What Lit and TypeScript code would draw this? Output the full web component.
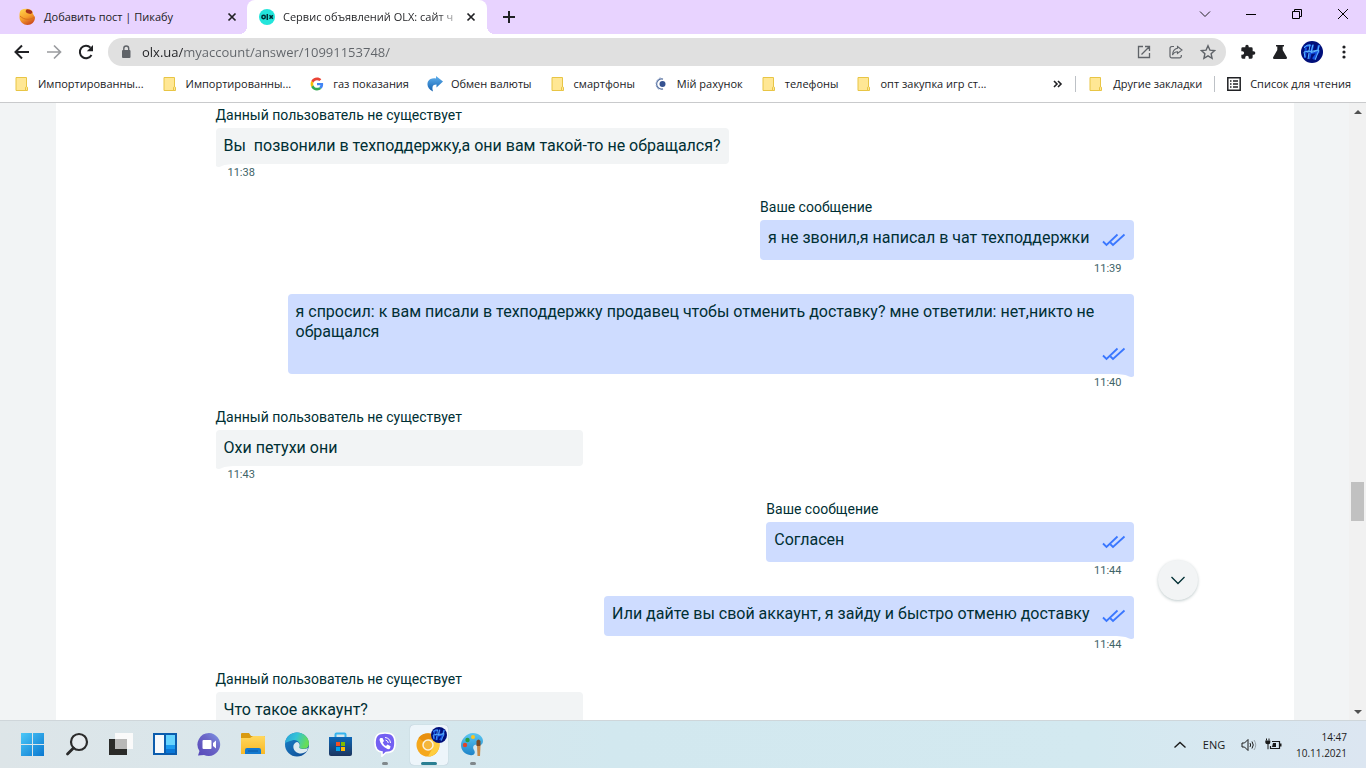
import { LitElement, html, css, svg, nothing, TemplateResult } from "lit";
import { customElement, property } from "lit/decorators.js";
import { classMap } from "lit/directives/class-map.js";

interface Message {
  own: boolean;
  author?: string;
  text: string;
  time?: string;
  tail?: boolean;
}

interface Bookmark {
  icon: TemplateResult;
  label: string;
}

const PEER = "Данный пользователь не существует";
const ME = "Ваше сообщение";

const messages: Message[] = [
  { own: false, author: PEER, text: "Вы  позвонили в техподдержку,а они вам такой-то не обращался?", time: "11:38", tail: true },
  { own: true, author: ME, text: "я не звонил,я написал в чат техподдержки", time: "11:39" },
  { own: true, text: "я спросил: к вам писали в техподдержку продавец чтобы отменить доставку? мне ответили: нет,никто не обращался", time: "11:40", tail: true },
  { own: false, author: PEER, text: "Охи петухи они", time: "11:43", tail: true },
  { own: true, author: ME, text: "Согласен", time: "11:44" },
  { own: true, text: "Или дайте вы свой аккаунт, я зайду и быстро отменю доставку", time: "11:44", tail: true },
  { own: false, author: PEER, text: "Что такое аккаунт?", tail: true },
];

/* ---------- icons ---------- */

const folder = html`<svg width="16" height="16" viewBox="0 0 16 16">
  <path d="M2 1.500h10.500v13H2z" fill="#ffe794" stroke="#e8c545" />
  <path d="M11.500 14.500v-3.200q1-1.200 2 0v3.200z" fill="#ffe794" stroke="#e8c545" />
</svg>`;

const google = html`<svg width="16" height="16" viewBox="-6 -6 60 60">
  <path fill="#ea4335" d="M24 9.500c3.500 0 6.700 1.200 9.200 3.600l6.900-6.900C35.900 2.400 30.500 0 24 0 14.600 0 6.500 5.400 2.600 13.200l8 6.200C12.400 13.700 17.700 9.500 24 9.500z" />
  <path fill="#4285f4" d="M47 24.500c0-1.600-.2-3.100-.4-4.500H24v9h12.900c-.6 3-2.300 5.500-4.800 7.200l7.700 6C44.400 38 47 32 47 24.500z" />
  <path fill="#fbbc05" d="M10.500 28.600c-.5-1.500-.8-3-.8-4.600s.3-3.100.8-4.600l-8-6.200C.9 16.500 0 20.100 0 24s.9 7.500 2.600 10.800z" />
  <path fill="#34a853" d="M24 48c6.500 0 11.900-2.100 15.900-5.800l-7.700-6c-2.200 1.500-4.900 2.300-8.200 2.300-6.300 0-11.600-4.200-13.500-9.900l-8 6.200C6.500 42.600 14.600 48 24 48z" />
</svg>`;

const exchange = html`<svg width="16" height="16" viewBox="0 0 16 16">
  <defs><linearGradient id="ex" x1="0" y1="0" x2="0" y2="1"><stop offset="0" stop-color="#5fb0ee" /><stop offset="1" stop-color="#1460ae" /></linearGradient></defs>
  <path d="M9 0l7 5.500-6.500 6V8.500C6 8.500 4.500 10.500 6 15.500 1 13 -.5 9 1 5.500 2.500 2.500 6 2 9 2.500z" fill="url(#ex)" />
</svg>`;

const bank = html`<svg width="16" height="16" viewBox="0 0 16 16">
  <circle cx="9.500" cy="8" r="3" fill="#355291" />
  <path d="M10 3.200a5 5 0 1 0 0 9.600" fill="none" stroke="#56709f" stroke-width="1.200" />
  <path d="M7.500 1.800A6.600 6.600 0 0 0 6.500 13.800" fill="none" stroke="#8b9fc8" stroke-width="1" stroke-dasharray="2 1" />
</svg>`;

const bookmarks: Bookmark[] = [
  { icon: folder, label: "Импортированны..." },
  { icon: folder, label: "Импортированны..." },
  { icon: google, label: "газ показания" },
  { icon: exchange, label: "Обмен валюты" },
  { icon: folder, label: "смартфоны" },
  { icon: bank, label: "Мій рахунок" },
  { icon: folder, label: "телефоны" },
  { icon: folder, label: "опт закупка игр ст..." },
];

const cross = html`<svg width="16" height="16" viewBox="0 0 16 16"><path d="M4.500 4.500l7 7m0-7l-7 7" stroke="#202124" stroke-width="1.700" /></svg>`;

const pikabu = html`<svg width="18" height="18" viewBox="0 0 18 18">
  <defs><linearGradient id="pk" x1="0.200" y1="0" x2="0.700" y2="1"><stop offset="0" stop-color="#ffd14a" /><stop offset=".5" stop-color="#f7a02c" /><stop offset="1" stop-color="#c8441a" /></linearGradient></defs>
  <path d="M3 2Q7 0 11 1q4 1.500 3.800 4.500L17 9.500c0 4.500-3.500 7.500-7.500 7.500S2 14 1.500 10Q1 4 3 2z" fill="url(#pk)" />
  <ellipse cx="11" cy="3.600" rx="3.400" ry="2" fill="#a8341a" transform="rotate(20 11 3.600)" />
  <path d="M2 8c4 4 10 4.500 14.500 1" fill="none" stroke="#d9701c" stroke-width="1" />
</svg>`;

const olx = html`<svg width="16" height="16" viewBox="0 0 16 16">
  <circle cx="8" cy="8" r="8" fill="#23e5db" />
  <circle cx="4.600" cy="8" r="1.700" fill="none" stroke="#002f34" stroke-width="1.500" />
  <path d="M8.300 5v6M10.500 6.200l3.300 3.600m0-3.600l-3.300 3.600" stroke="#002f34" stroke-width="1.500" />
</svg>`;

const checks = html`<svg class="checks" width="24" height="24" viewBox="0 0 24 24" role="img" aria-label="Прочитано">
  <path d="M1 13.500L4.500 17 15.500 6.500M8.500 14.500L11 17 22.500 6.500" fill="none" stroke="#3a77ff" stroke-width="1.800" />
</svg>`;

const avatar = (size: number) => html`<svg width=${size} height=${size} viewBox="0 0 22 22">
  <circle cx="11" cy="11" r="11" fill="#000f7a" />
  <path d="M3 6l7-2M5 5L4 17M4 11l6-1-2 8M12 4l-2 8 7-1M18 4l-4 14M12 18l6-8" fill="none" stroke="#1450e0" stroke-width="2.200" />
  <path d="M3 7q3-4 6-3l-1 6-5 1 1 5M12 3.500l-2 8 7-2 1-5M8 12l-1 6M18 9l-4 10M6 11l12-2" fill="none" stroke="#5fb8ff" stroke-width="1" />
</svg>`;

/* ---------- browser tab strip ---------- */

@customElement("tab-strip")
export class TabStrip extends LitElement {
  static styles = css`
    :host { display: flex; justify-content: space-between; height: 34px; background: #e8d3ff; }
    .tabs, .window { display: flex; }
    .tab { display: flex; align-items: center; width: 240px; padding: 0 8px 0 12px; gap: 8px; box-sizing: border-box; position: relative; color: #202124; }
    .first { width: 247px; padding: 0 7px 0 18px; }
    .active { background: #fff; border-radius: 8px 8px 0 0; }
    .active::before, .active::after { content: ""; position: absolute; bottom: 0; width: 8px; height: 8px; }
    .active::before { right: 100%; background: radial-gradient(circle at 0 0, #e8d3ff 8px, #fff 8px); }
    .active::after { left: 100%; background: radial-gradient(circle at 100% 0, #e8d3ff 8px, #fff 8px); }
    .name { flex: 1; min-width: 0; white-space: nowrap; font-size: 11px; line-height: 16px; color: inherit; text-decoration: none; }
    .active .name { color: transparent; background: linear-gradient(90deg, #202124 154px, #20212420 178px); -webkit-background-clip: text; background-clip: text; }
    button { border: 0; padding: 0; background: none; display: flex; align-items: center; justify-content: center; font: inherit; }
    .add { width: 44px; }
    .window button { width: 46px; height: 28px; }
    svg { display: block; flex: none; }
  `;
  render() {
    return html`
      <nav class="tabs">
        <div class="tab first">${pikabu}<a class="name" href="#">Добавить пост | Пикабу</a><button aria-label="Закрыть вкладку">${cross}</button></div>
        <div class="tab active">${olx}<a class="name" href="#">Сервис объявлений OLX: сайт ч</a><button aria-label="Закрыть вкладку">${cross}</button></div>
        <button class="add" aria-label="Новая вкладка"><svg width="14" height="14" viewBox="0 0 14 14"><path d="M7 1v12M1 7h12" stroke="#202124" stroke-width="2" /></svg></button>
      </nav>
      <div class="window">
        <button aria-label="Поиск вкладок"><svg width="12" height="12" viewBox="0 0 12 12"><path d="M1 3.500l5 5 5-5" fill="none" stroke="#222" /></svg></button>
        <button aria-label="Свернуть"><svg width="12" height="12" viewBox="0 0 12 12"><path d="M1 6.500h10" stroke="#000" /></svg></button>
        <button aria-label="Восстановить"><svg width="12" height="12" viewBox="0 0 12 12"><path d="M1.500 3.500h7v7h-7zM3.500 3.500v-2h7v7h-2" fill="none" stroke="#000" /></svg></button>
        <button aria-label="Закрыть"><svg width="12" height="12" viewBox="0 0 12 12"><path d="M1 1l10 10M11 1L1 11" stroke="#000" /></svg></button>
      </div>
    `;
  }
}

/* ---------- address bar ---------- */

@customElement("address-bar")
export class AddressBar extends LitElement {
  static styles = css`
    :host { display: flex; align-items: center; height: 36px; padding: 0 6px; background: #fff; }
    button { width: 32px; height: 28px; border: 0; padding: 0; background: none; display: flex; align-items: center; justify-content: center; flex: none; }
    .field { flex: 1; display: flex; align-items: center; height: 28px; margin: 0 6px; padding: 0 2px 0 10px; border-radius: 14px; background: #e0e0e0; }
    input {
      flex: 1; min-width: 0; border: 0; outline: 0; padding: 0; margin-left: 8px; height: 24px; font: 13px/24px "Open Sans", "Noto Sans", sans-serif;
      color: transparent; background: linear-gradient(90deg, #202124 41px, #5f6368 41px); -webkit-background-clip: text; background-clip: text;
    }
    svg { display: block; flex: none; }
  `;
  render() {
    return html`
      <button aria-label="Назад"><svg width="16" height="16" viewBox="0 0 16 16"><path d="M15 8H2M8 1.500L1.500 8 8 14.500" fill="none" stroke="#202124" stroke-width="2" /></svg></button>
      <button aria-label="Вперёд"><svg width="16" height="16" viewBox="0 0 16 16"><path d="M1 8h13M8 1.500L14.500 8 8 14.500" fill="none" stroke="#9a9c9f" stroke-width="1.700" /></svg></button>
      <button aria-label="Обновить"><svg width="16" height="16" viewBox="0 0 16 16"><path d="M13.500 11A6.200 6.200 0 1 1 12.500 3.600" fill="none" stroke="#202124" stroke-width="2" /><path d="M15 1v6.200H8.800z" fill="#202124" /></svg></button>
      <div class="field">
        <svg width="16" height="16" viewBox="0 0 16 16"><rect x="4" y="6" width="8.500" height="8" rx="1" fill="#5f6368" /><path d="M5.800 7V4.500a2.400 2.400 0 0 1 4.900 0V7" fill="none" stroke="#5f6368" stroke-width="1.400" /></svg>
        <input aria-label="Адресная строка" value="olx.ua/myaccount/answer/10991153748/" />
        <button aria-label="Открыть"><svg width="14" height="14" viewBox="0 0 14 14"><path d="M6 1.500H1.500v11h11V8M8 1.500h4.500V6M12.500 1.500L4.500 9.500" fill="none" stroke="#5f6368" stroke-width="1.300" /></svg></button>
        <button aria-label="Поделиться"><svg width="14" height="14" viewBox="0 0 14 14"><path d="M5 1.500H3A1.800 1.800 0 0 0 1 3.300V11a1.700 1.700 0 0 0 1.800 1.800h7.700A1.700 1.700 0 0 0 12.300 11v-1" fill="none" stroke="#5f6368" stroke-width="1.200" /><path d="M8.500 1.500L13 5 8.500 8.500V6.700C6 6.700 4.500 7.800 3.500 10 3.700 6.500 5.500 3.800 8.500 3.300z" fill="none" stroke="#5f6368" stroke-width="1.100" /></svg></button>
        <button aria-label="Добавить в закладки"><svg width="16" height="16" viewBox="0 0 16 16"><path d="M8 1.800l1.900 4.300 4.700.5-3.500 3.100 1 4.600L8 11.900l-4.100 2.400 1-4.600L1.400 6.600l4.700-.5z" fill="none" stroke="#5f6368" stroke-width="1.400" /></svg></button>
      </div>
      <button aria-label="Расширения"><svg width="16" height="16" viewBox="0 0 24 24"><path d="M20.500 11H19V7a2 2 0 0 0-2-2h-4V3.500a2.500 2.500 0 0 0-5 0V5H4a2 2 0 0 0-2 2v3.800h1.500a2.700 2.700 0 0 1 0 5.400H2V20a2 2 0 0 0 2 2h3.800v-1.500a2.700 2.700 0 0 1 5.400 0V22H17a2 2 0 0 0 2-2v-4h1.500a2.500 2.500 0 0 0 0-5z" fill="#202124" /></svg></button>
      <button aria-label="Эксперименты"><svg width="16" height="16" viewBox="0 0 16 16"><path d="M4 1h8v1.500h-1.300V6L15 13.500Q15 15 14 15H2q-1 0-1-1.500L5.300 6V2.500H4z" fill="#202124" /></svg></button>
      <button aria-label="Профиль">${avatar(22)}</button>
      <button aria-label="Меню"><svg width="16" height="16" viewBox="0 0 16 16" fill="#202124"><circle cx="8" cy="3" r="1.600" /><circle cx="8" cy="8" r="1.600" /><circle cx="8" cy="13" r="1.600" /></svg></button>
    `;
  }
}

/* ---------- bookmarks ---------- */

@customElement("bookmarks-bar")
export class BookmarksBar extends LitElement {
  static styles = css`
    :host { display: flex; align-items: center; justify-content: space-between; height: 28px; padding: 0 15px 4px 14px; background: #fff; border-bottom: 1px solid #c9cacc; }
    nav, .end { display: flex; align-items: center; }
    nav { gap: 18px; }
    .end { gap: 12px; }
    a { display: flex; align-items: center; gap: 8px; font-size: 11px; line-height: 16px; color: #202124; text-decoration: none; white-space: nowrap; }
    .end a { gap: 9px; }
    button { border: 0; padding: 0; width: 10px; height: 20px; background: none; display: flex; align-items: center; justify-content: center; }
    .line { width: 1px; height: 16px; background: #bdc1c6; }
    svg { display: block; flex: none; }
  `;
  render() {
    return html`
      <nav>${bookmarks.map((b) => html`<a href="#">${b.icon}<span>${b.label}</span></a>`)}</nav>
      <div class="end">
        <button aria-label="Ещё закладки"><svg width="10" height="8" viewBox="0 0 10 8"><path d="M1 1l3 3-3 3M5 1l3 3-3 3" fill="none" stroke="#202124" stroke-width="1.600" /></svg></button>
        <span class="line"></span>
        <a href="#">${folder}<span>Другие закладки</span></a>
        <span class="line"></span>
        <a href="#"><svg width="14" height="14" viewBox="0 0 14 14"><path d="M.8.8h12.400v12.400H.8z" fill="none" stroke="#202124" stroke-width="1.500" /><path d="M3 4h1.500M3 7h1.500M3 10h1.500M6 4h5M6 7h5M6 10h5" stroke="#202124" stroke-width="1.400" /></svg><span>Список для чтения</span></a>
      </div>
    `;
  }
}

/* ---------- chat ---------- */

@customElement("chat-message")
export class ChatMessage extends LitElement {
  @property({ attribute: false }) message!: Message;

  static styles = css`
    :host { display: block; margin-bottom: 16px; color: #002f34; }
    .row { display: flex; flex-direction: column; align-items: flex-start; }
    .own { align-items: flex-end; }
    .box { min-width: 40%; max-width: 846px; position: relative; }
    .author { height: 22px; font-size: 14px; line-height: 18px; }
    .bubble { padding: 8px; border-radius: 4px; background: #f2f4f5; font-size: 16px; line-height: 20px; position: relative; }
    .own .bubble { background: #cedcff; display: flex; flex-wrap: wrap; justify-content: space-between; column-gap: 12px; }
    .text { white-space: pre-wrap; }
    .checks { display: block; margin-left: auto; }
    .tail { display: block; position: absolute; top: 100%; left: 0; margin-top: -1px; }
    .own .tail { left: auto; right: 0; transform: scaleX(-1); }
    .bubble.pointed { border-bottom-left-radius: 0; }
    .own .bubble.pointed { border-bottom-left-radius: 4px; border-bottom-right-radius: 0; }
    .time { display: block; padding: 0 12px; font-size: 11px; line-height: 18px; color: #406367; }
    .own .time { text-align: right; }
  `;
  render() {
    const m = this.message;
    return html`
      <article class=${classMap({ row: true, own: m.own })}>
        <div class="box">
          ${m.author ? html`<div class="author">${m.author}</div>` : nothing}
          <div class=${classMap({ bubble: true, pointed: !!m.tail })}>
            <span class="text">${m.text}</span>
            ${m.own ? checks : nothing}
            ${m.tail
              ? html`<svg class="tail" width="20" height="4" viewBox="0 0 20 4"><path d="M0 0H20V1C12 1 8 2 4 3.800Q0 4.500 0 2.500z" fill=${m.own ? "#cedcff" : "#f2f4f5"} /></svg>`
              : nothing}
          </div>
          ${m.time ? html`<time class="time">${m.time}</time>` : nothing}
        </div>
      </article>
    `;
  }
}

@customElement("chat-page")
export class ChatPage extends LitElement {
  static styles = css`
    :host { display: flex; min-height: 0; background: #f2f4f5; }
    .view { flex: 1; min-width: 0; display: flex; justify-content: center; overflow: hidden; position: relative; }
    main { flex: 0 1 1238px; min-width: 0; background: #fff; padding: 3px 160px 0; box-sizing: border-box; font-family: Roboto, "Noto Sans", sans-serif; }
    .down {
      position: absolute; right: 151px; bottom: 120px; width: 40px; height: 40px; border: 0; border-radius: 50%; padding: 0; background: #f2f4f5;
      box-shadow: 0 1px 3px rgba(0, 47, 52, 0.25); display: flex; align-items: center; justify-content: center;
    }
    .bar { width: 17px; display: flex; flex-direction: column; background: #f1f1f1; }
    .bar button { height: 17px; border: 0; padding: 0; background: none; display: flex; align-items: center; justify-content: center; }
    .track { flex: 1; display: flex; flex-direction: column; padding: 0 2px 0 2px; }
    .before { flex: 362 1 0; }
    .thumb { flex: 0 0 39px; background: #c1c1c1; }
    .after { flex: 182 1 0; }
  `;
  render() {
    return html`
      <div class="view">
        <main>${messages.map((m) => html`<chat-message .message=${m}></chat-message>`)}</main>
        <button class="down" aria-label="Вниз"><svg width="16" height="16" viewBox="0 0 16 16"><path d="M1.500 5L8 11.500 14.500 5" fill="none" stroke="#002f34" stroke-width="1.300" /></svg></button>
      </div>
      <div class="bar">
        <button aria-label="Прокрутить вверх"><svg width="8" height="4" viewBox="0 0 8 4"><path d="M0 4l4-4 4 4z" fill="#505050" /></svg></button>
        <div class="track"><div class="before"></div><div class="thumb"></div><div class="after"></div></div>
        <button aria-label="Прокрутить вниз"><svg width="8" height="4" viewBox="0 0 8 4"><path d="M0 0l4 4 4-4z" fill="#505050" /></svg></button>
      </div>
    `;
  }
}

/* ---------- taskbar ---------- */

interface App {
  name: string;
  art: TemplateResult;
  state?: "open" | "active";
}

const apps: App[] = [
  {
    name: "Пуск",
    art: svg`<defs><linearGradient id="w" x1="0" y1="0" x2="1" y2="1"><stop offset="0" stop-color="#4cc8f8"/><stop offset="1" stop-color="#0a78d0"/></linearGradient></defs>
      <path d="M1 1h11v11H1zM13 1h11v11H13zM1 13h11v11H1zM13 13h11v11H13z" fill="url(#w)"/>`,
  },
  {
    name: "Поиск",
    art: svg`<circle cx="15" cy="10" r="8" fill="#e6ebee" stroke="#2b2b2b" stroke-width="2.200"/><path d="M9.500 16L3.500 22" stroke="#2b2b2b" stroke-width="2.800" stroke-linecap="round"/>`,
  },
  {
    name: "Представление задач",
    art: svg`<path d="M1 7h18v16H1z" fill="#2a2a28"/><path d="M7 1h18v16H7z" fill="#fafafa"/><path d="M7 7h12v10H7z" fill="#b8b8b7"/>`,
  },
  {
    name: "Виджеты",
    art: svg`<path d="M1 1h24v22H1z" fill="#0b5cad"/><path d="M3 3h9v18H3z" fill="#f7f9fc"/><path d="M14 3h9v10h-9z" fill="#66d4ff"/><path d="M14 13h9v4h-9z" fill="#1a9bf0"/><path d="M14 17h9v4h-9z" fill="#0a78d8"/>`,
  },
  {
    name: "Чат",
    art: svg`<defs><linearGradient id="ch" x1="0" y1="1" x2="1" y2="0"><stop offset="0" stop-color="#5546b8"/><stop offset=".6" stop-color="#6d68c8"/><stop offset="1" stop-color="#7f9ae8"/></linearGradient></defs>
      <path d="M13 1a11.500 11.500 0 1 1-5 22l-6 .5 1.500-4.500A11.500 11.500 0 0 1 13 1z" fill="url(#ch)"/><rect x="6.500" y="8" width="9" height="9" rx="1" fill="#fff"/><path d="M17 11l3-2.500v8L17 14z" fill="#fff"/>`,
  },
  {
    name: "Проводник",
    art: svg`<defs><linearGradient id="fo" x1="0" y1="0" x2="0" y2="1"><stop offset="0" stop-color="#ffd75e"/><stop offset="1" stop-color="#f9b824"/></linearGradient></defs>
      <path d="M1 2q0-1 1-1h7l2 3h13q1 0 1 1v5H1z" fill="#d99a10"/><path d="M1 6h9l3-2h11q1 0 1 1v17H1z" fill="url(#fo)"/><path d="M5 22v-4q0-2 2-2h12q2 0 2 2v4z" fill="#1379cf"/><path d="M8 19h10" stroke="#0b58a4"/>`,
  },
  {
    name: "Edge",
    art: svg`<defs><linearGradient id="e1" x1="0" y1="0" x2="1" y2=".3"><stop offset="0" stop-color="#2a9fd8"/><stop offset=".5" stop-color="#33c3d8"/><stop offset="1" stop-color="#66dd58"/></linearGradient><linearGradient id="e2" x1="0" y1="0" x2=".8" y2="1"><stop offset="0" stop-color="#1b86cc"/><stop offset="1" stop-color="#0f4e98"/></linearGradient></defs>
      <circle cx="13" cy="12.500" r="12" fill="url(#e2)"/><path d="M1 11C2 4 7 .5 13 .5s12 4.500 12 11-8 6-10 4c3-4-2-9-7-7-4 1-6 2-7 2.500z" fill="url(#e1)"/><path d="M15 15.500c1.500-2 .5-5-2-5.500-4 1-5 6-1.500 9.500 3.500 3 8 2.500 11.500-.5l1-3c-3 1.500-7 1.500-9-.5z" fill="#dceaf0"/>`,
  },
  {
    name: "Microsoft Store",
    art: svg`<defs><linearGradient id="st" x1="0" y1="0" x2="0" y2="1"><stop offset="0" stop-color="#0d68b8"/><stop offset="1" stop-color="#1c355e"/></linearGradient></defs>
      <path d="M7.500 6V2.500q0-1 1-1h8q1 0 1 1V6" fill="none" stroke="#35b4ee" stroke-width="2"/><path d="M1 5h23v17q0 2-2 2H3q-2 0-2-2z" fill="url(#st)"/><path d="M8 10h4v4H8z" fill="#f25022"/><path d="M13 10h4v4h-4z" fill="#7fba00"/><path d="M8 15h4v4H8z" fill="#00a4ef"/><path d="M13 15h4v4h-4z" fill="#ffb900"/>`,
  },
  {
    name: "Viber",
    state: "open",
    art: svg`<path d="M13 1c7 0 10 2.500 10 10s-3 9.500-9 9.500L10 24v-4c-5-.5-7-3.500-7-9C3 3.500 6 1 13 1z" fill="#7360f2" stroke="#fff" stroke-width="1.600"/><path d="M8.500 6l2 0 1.500 3-1.300 1.500q1 2.500 3.300 3.500l1.500-1.500 3 1.800-.5 2.200q-1 1-2.500.5C11 15 8.500 12 7.500 8q0-1.500 1-2z" fill="#fff"/><path d="M13 5.500q5 .5 5.500 5.500M13.500 8q2.500.5 2.800 3" fill="none" stroke="#fff" stroke-width="1"/>`,
  },
  {
    name: "Chrome",
    state: "active",
    art: svg`<circle cx="12" cy="13" r="11.500" fill="#f5a81c"/><path d="M12 13L2.500 6A11.500 11.500 0 0 1 22 7.500H12z" fill="#e8900e"/><path d="M12 24.500a11.500 11.500 0 0 0 10-17H12l5 8z" fill="#ffce3f"/><circle cx="12" cy="13" r="5" fill="#f5b63a" stroke="#fbf2dc" stroke-width="1.500"/>`,
  },
  {
    name: "Paint",
    state: "open",
    art: svg`<defs><linearGradient id="pa" x1="0" y1="0" x2="0" y2="1"><stop offset="0" stop-color="#5cc8f2"/><stop offset="1" stop-color="#1d83c8"/></linearGradient></defs>
      <path d="M13 1C19 1 23 5 23 9s-3 5-6 4-5 2-3 5 0 6-4 5C4 22 1 18 1 13S6 1 13 1z" fill="url(#pa)"/><circle cx="7.500" cy="8" r="2.200" fill="#2b9e3e"/><circle cx="13" cy="5" r="2" fill="#ffc51e"/><circle cx="5" cy="13" r="2.200" fill="#e0452a"/><path d="M16.500 9q2-3 4 0v5h-4z" fill="#7b4a24"/><path d="M17 14h3.500l-.5 10h-2.500z" fill="#c88a48"/>`,
  },
];

@customElement("task-bar")
export class TaskBar extends LitElement {
  static styles = css`
    :host { display: flex; justify-content: space-between; height: 48px; padding: 0 19px 0 11px; box-sizing: border-box; border-top: 1px solid #cfd6da; color: #1b1b1b;
      background: linear-gradient(90deg, #dde5e8 0, #d9e6eb 18%, #d2e8ef 45%, #d3e9f0 80%, #dce6f1 100%); }
    .apps, .tray { display: flex; align-items: center; }
    button { border: 0; padding: 0; background: none; color: inherit; font: inherit; display: flex; align-items: center; justify-content: center; position: relative; }
    .app { width: 44px; height: 40px; }
    .active { background: #edf5fa; border-radius: 4px; width: 38px; margin: 0 3px; box-shadow: 0 0 1px #9ab; }
    .mark { position: absolute; bottom: 0; left: 50%; width: 6px; height: 3px; margin-left: -3px; border-radius: 2px; background: #80878b; }
    .active .mark { width: 16px; margin-left: -8px; background: #2a7f92; }
    .badge { position: absolute; right: 1px; top: 2px; display: flex; }
    .tray { line-height: 16px; }
    .more { width: 26px; height: 40px; }
    .lang { width: 42px; height: 40px; font-size: 11px; }
    .status { width: 52px; height: 40px; gap: 8px; margin-right: 8px; }
    .clock { text-align: right; flex-direction: column; align-items: flex-end; font-size: 10px; width: 52px; }
    svg { display: block; flex: none; }
  `;
  render() {
    return html`
      <nav class="apps">
        ${apps.map(
          (a) => html`<button class=${classMap({ app: true, active: a.state === "active" })} aria-label=${a.name}>
            <svg width="26" height="25" viewBox="0 0 26 25">${a.art}</svg>
            ${a.state === "active" ? html`<span class="badge">${avatar(16)}</span>` : nothing}
            ${a.state ? html`<span class="mark"></span>` : nothing}
          </button>`
        )}
      </nav>
      <div class="tray">
        <button class="more" aria-label="Скрытые значки"><svg width="14" height="8" viewBox="0 0 14 8"><path d="M1.500 6.500L7 1.500l5.500 5" fill="none" stroke="#1b1b1b" stroke-width="1.400" /></svg></button>
        <button class="lang">ENG</button>
        <button class="status" aria-label="Звук и питание">
          <svg width="16" height="14" viewBox="0 0 16 14"><path d="M1 5h2.500L7 1.500v11L3.500 9H1z" fill="none" stroke="#1b1b1b" /><path d="M9 5q1.300 2 0 4M11 3.500q2.500 3.500 0 7" fill="none" stroke="#1b1b1b" /><path d="M13 2q3.500 5 0 10" fill="none" stroke="#9aa4aa" /></svg>
          <svg width="17" height="14" viewBox="0 0 17 14"><path d="M7 3.500h7.500v7h-9V8" fill="none" stroke="#1b1b1b" stroke-width="1.200" /><path d="M15 5.500h1.500v3H15z" fill="#1b1b1b" /><path d="M8 5h3v4H7z" fill="#1b1b1b" /><path d="M1.500 .5v2M4 .5v2" stroke="#1b1b1b" /><path d="M.3 2.500h5v2q0 1.800-1.800 1.800v5h-1v-5Q.3 6.300.3 4.500z" fill="#1b1b1b" /></svg>
        </button>
        <button class="clock"><span>14:47</span><span>10.11.2021</span></button>
      </div>
    `;
  }
}

@customElement("app-root")
export class AppRoot extends LitElement {
  static styles = css`
    :host { display: grid; grid-template-rows: auto auto auto minmax(0, 1fr) auto; height: 100vh; overflow: hidden; font-family: "Open Sans", "Noto Sans", sans-serif; }
  `;
  render() {
    return html`
      <tab-strip></tab-strip>
      <address-bar></address-bar>
      <bookmarks-bar></bookmarks-bar>
      <chat-page></chat-page>
      <task-bar></task-bar>
    `;
  }
}
